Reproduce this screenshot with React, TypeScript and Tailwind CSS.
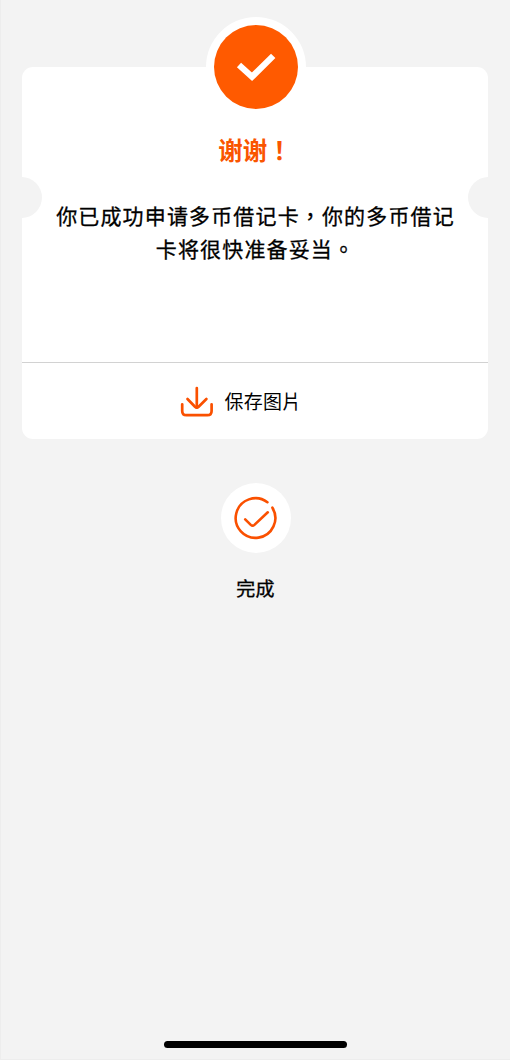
function SuccessBadge() {
  return (
    <div className="relative z-10 ml-px flex size-[100px] shrink-0 items-center justify-center rounded-full bg-white">
      <div className="flex size-[84px] items-center justify-center rounded-full bg-[#ff5a00]">
        <svg
          className="h-[28px] w-[38px] overflow-visible"
          viewBox="0 0 38 28"
          fill="none"
          stroke="white"
          strokeWidth="6.2"
        >
          <path d="M2 12L15 23.8L36.2 2.9" />
        </svg>
      </div>
    </div>
  );
}

function DownloadIcon() {
  return (
    <svg
      className="h-[32px] w-[34px] shrink-0"
      viewBox="0 0 34 32"
      fill="none"
      stroke="#fa5000"
      strokeWidth="2.7"
      strokeLinecap="round"
      strokeLinejoin="round"
    >
      <path d="M16.8 3V22.5" />
      <path d="M7.5 14L15 21.7Q16.8 23.4 18.6 21.7L26.4 14" />
      <path d="M2.2 19.3V26Q2.2 30.2 6.4 30.2H27.4Q31.6 30.2 31.6 26V19.3" />
    </svg>
  );
}

function DoneIcon() {
  return (
    <svg
      className="size-[44px]"
      viewBox="0 0 44 44"
      fill="none"
      stroke="#fa5000"
      strokeWidth="2.6"
      strokeLinecap="round"
      strokeLinejoin="round"
    >
      <path d="M33.4 6.2A19.8 19.8 0 1 0 38.4 11.7" />
      <path d="M11.2 23.3L16.8 28.9Q18.6 30.5 20.4 28.9L33.8 16.3" />
    </svg>
  );
}

export default function App() {
  return (
    <div
      lang="zh-Hant"
      className="flex h-[1060px] w-[510px] flex-col items-center overflow-hidden border-b border-l border-[#ededed] bg-[#f3f3f3] pt-[17px] font-['Noto_Sans_CJK_TC','Noto_Sans_CJK_SC',sans-serif] text-black"
    >
      <SuccessBadge />
      <main className="relative -mt-[50px] mr-px h-[372px] w-[466px] shrink-0 overflow-hidden rounded-[11px] bg-white">
        <span className="absolute top-[110px] -left-[21px] size-[41px] rounded-full bg-[#f3f3f3]" />
        <span className="absolute top-[110px] -right-[21px] size-[41px] rounded-full bg-[#f3f3f3]" />
        <div className="flex h-[296px] flex-col items-center border-b border-[#d2d2d2] pt-[65px]">
          <h1 className="text-[24.5px] leading-[36px] font-bold text-[#fa5500]">谢谢！</h1>
          <p className="mt-[31px] ml-px text-center text-[21px] leading-[33px] tracking-[1.15px] whitespace-nowrap [-webkit-text-stroke:0.3px_black]">
            你已成功申请多币借记卡，你的多币借记
            <br />
            卡将很快准备妥当。
          </p>
        </div>
        <button className="flex h-[76px] w-full items-center pl-[158px]">
          <DownloadIcon />
          <span className="ml-[10.5px] text-[19px] leading-[28px] tracking-[0.2px]">保存图片</span>
        </button>
      </main>
      <button className="mt-[44px] flex shrink-0 flex-col items-center">
        <span className="flex size-[70px] items-center justify-center rounded-full bg-white">
          <DoneIcon />
        </span>
        <span className="mt-[21px] text-[19px] leading-[28px] tracking-[0.2px] [-webkit-text-stroke:0.35px_black]">
          完成
        </span>
      </button>
      <div className="mt-auto mb-[11px] h-[7px] w-[183px] shrink-0 rounded-full bg-black" />
    </div>
  );
}
